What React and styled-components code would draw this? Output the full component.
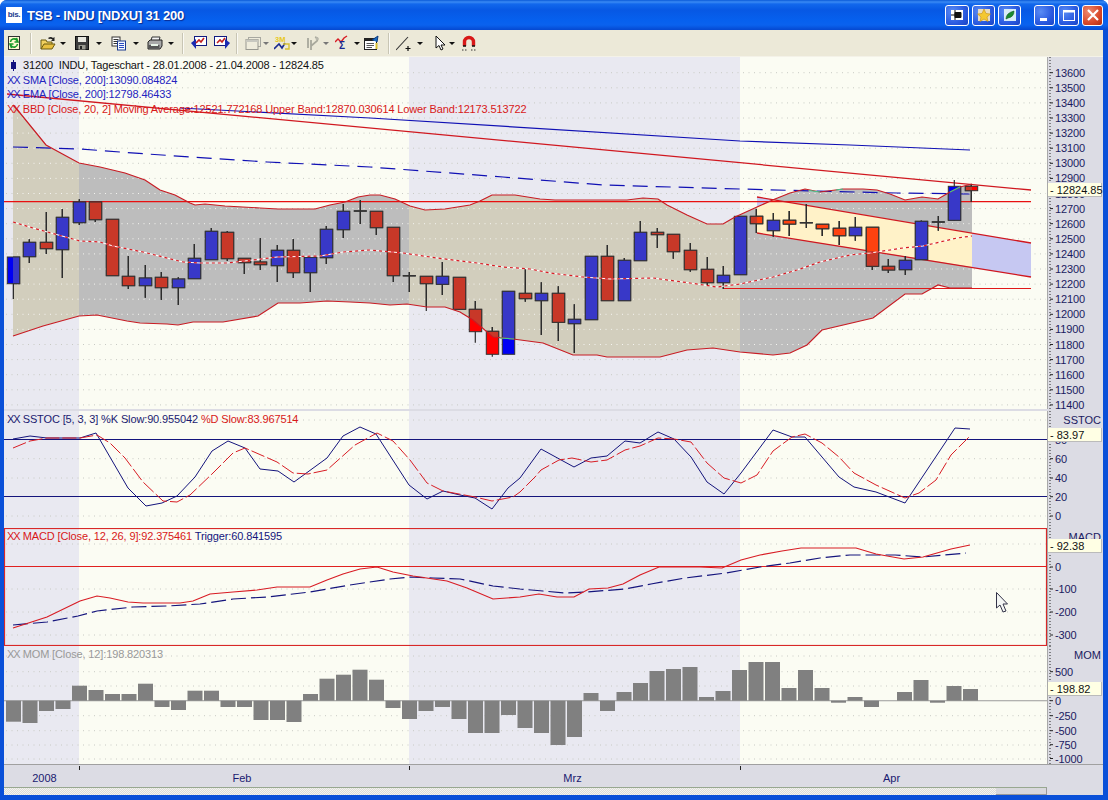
import React from 'react';
import styled, { createGlobalStyle } from 'styled-components';

const GlobalStyle = createGlobalStyle`
  html, body { margin: 0; padding: 0; background: #fff; }
  body { font-family: "Liberation Sans", Arial, sans-serif; }
`;

const Window = styled.div`
  width: 1108px;
  height: 800px;
  display: flex;
  flex-direction: column;
  overflow: hidden;
  background: #0a50d8;
  border-radius: 7px 7px 0 0;
`;

const TitleBar = styled.div`
  height: 30px;
  flex: none;
  display: flex;
  align-items: center;
  padding: 0 5px 0 6px;
  background: linear-gradient(180deg, #0a5ad8 0, #3a8af4 2px, #1268ec 4px, #0758e4 10px, #0660ee 20px, #0a62ee 25px, #0548d0 30px);
`;

const AppLogo = styled.div`
  width: 16px;
  height: 16px;
  background: #fff;
  color: #1a3a90;
  font-size: 8px;
  font-weight: bold;
  line-height: 16px;
  text-align: center;
  letter-spacing: -0.3px;
`;

const Title = styled.div`
  margin-left: 5px;
  flex: 1;
  color: #fff;
  font-size: 13px;
  font-weight: bold;
  letter-spacing: -0.2px;
  white-space: pre;
  text-shadow: 1px 1px 1px #0a2a90;
`;

const ButtonGroup = styled.div`
  display: flex;
  gap: ${p => p.$gap}px;
  margin-right: ${p => p.$after}px;
`;

const CaptionButton = styled.div`
  width: ${p => p.$w}px;
  height: 21px;
  box-sizing: border-box;
  border: 1px solid #fff;
  border-radius: 3px;
  display: flex;
  align-items: center;
  justify-content: center;
  background: ${p => p.$close
    ? 'radial-gradient(circle at 30% 30%, #ee8a70, #d8482a 60%, #b02c10)'
    : 'radial-gradient(circle at 30% 30%, #5a8cf4, #2a5ae0 60%, #1a44c4)'};
`;

const Body = styled.div`
  flex: 1;
  min-height: 0;
  margin: 0 5px 5px 4px;
  display: flex;
  flex-direction: column;
  background: #dcdce4;
`;

const Toolbar = styled.div`
  height: 27px;
  flex: none;
  box-sizing: border-box;
  display: flex;
  align-items: center;
  padding-left: 3px;
  background: #ece9d8;
  border-bottom: 1px solid #f4f2e8;
`;

const ToolGroup = styled.div`
  display: flex;
  align-items: center;
`;

const Tool = styled.div`
  width: ${p => p.$w}px;
  display: flex;
  align-items: center;
  gap: ${p => p.$gap || 0}px;
  flex: none;
`;

const Caret = styled.span`
  width: 0;
  height: 0;
  flex: none;
  border-left: 3px solid transparent;
  border-right: 3px solid transparent;
  border-top: 3px solid ${p => p.$off ? '#777' : '#111'};
`;

const ToolSep = styled.div`
  width: 1px;
  height: 21px;
  flex: none;
  margin: 0 ${p => p.$right}px 0 ${p => p.$left}px;
  background: #c8c5b4;
  box-shadow: 1px 0 0 #fbfaf4;
`;

const Icon = styled.svg`
  width: ${p => p.$w || 16}px;
  height: 16px;
  flex: none;
  display: block;
`;

const PaneRow = styled.div`
  height: ${p => p.$h}px;
  flex: none;
  display: grid;
  grid-template-columns: 1043px 56px;
  margin-bottom: ${p => p.$gap || 0}px;
`;

const ChartBox = styled.div`
  position: relative;
  overflow: hidden;
`;

const ChartSvg = styled.svg`
  display: block;
  width: 100%;
  height: 100%;
`;

const Legend = styled.div`
  position: absolute;
  left: 3px;
  top: 1px;
  font-size: 11px;
  letter-spacing: -0.13px;
  line-height: 14.5px;
  white-space: pre;
  color: ${p => p.$color || '#1a1a70'};
`;

const LegendLine = styled.div`
  color: ${p => p.$color || 'inherit'};
`;

const LegendPart = styled.span`
  color: ${p => p.$color};
`;

const Marks = styled.span`
  letter-spacing: -1px;
  margin-right: 3px;
`;

const Bullet = styled.span`
  position: relative;
  display: inline-block;
  width: 5px;
  height: 7px;
  margin: 0 7px 0 4px;
  background: #101080;
  &::before {
    content: '';
    position: absolute;
    left: 2px;
    top: -2px;
    width: 1px;
    height: 11px;
    background: #101080;
  }
`;

const AxisBox = styled.div`
  position: relative;
  overflow: hidden;
  background: #dcdce4;
  border-left: 1px solid #a8a8a8;
  box-sizing: border-box;
`;

const AxisName = styled.div`
  position: absolute;
  right: 2px;
  top: 3px;
  font-size: 11px;
  color: #1a1a60;
`;

const ValueTag = styled.div`
  position: absolute;
  left: 0;
  right: 1px;
  top: ${p => p.$top}px;
  height: 14px;
  box-sizing: border-box;
  padding-left: 2px;
  background: #ffffe4;
  border-right: 1px solid #bbb;
  border-bottom: 1px solid #bbb;
  color: #111;
  font-size: 11px;
  line-height: 14px;
  white-space: pre;
`;

const TimeRow = styled.div`
  height: 23px;
  flex: none;
  display: grid;
  grid-template-columns: 75px 330px 331px 307px 56px;
  border-top: 1px solid #a0a0a0;
  box-sizing: border-box;
  background: #dcdce4;
`;

const MonthCell = styled.div`
  position: relative;
  text-align: center;
  text-indent: ${p => p.$nudge || 0}px;
  font-size: 11px;
  line-height: 27px;
  color: #1a1a70;
  &::before {
    content: '';
    display: ${p => p.$tick ? 'block' : 'none'};
    position: absolute;
    left: 0;
    top: 1px;
    width: 1px;
    height: 4px;
    background: #222;
  }
`;

const ScrollRow = styled.div`
  flex: 1;
  display: grid;
  grid-template-columns: 1043px 56px;
`;

const ScrollTrack = styled.div`
  display: flex;
  justify-content: flex-end;
  border-top: 1px solid #98a890;
  background: repeating-conic-gradient(#dcdcd8 0 25%, #f4f4f0 0 50%) 0 0 / 2px 2px;
`;

const ScrollThumb = styled.div`
  width: 50px;
  background: #d8d8dc;
  border-right: 1px solid #999;
  border-bottom: 1px solid #999;
`;

const MONTHS = [
  { x: 4, w: 75, alt: true },
  { x: 79, w: 330, alt: false },
  { x: 409, w: 331, alt: true },
  { x: 740, w: 307, alt: false },
];

// x, wick top, body top, body bottom, wick bottom, colour
const CANDLES = [
  [13.3, 257, 257, 283.7, 299, 'b'], [29.3, 239.3, 242.3, 256.7, 263, 'b'], [46.3, 212, 242.3, 248.7, 254, 'r'],
  [62.3, 209, 217.3, 249.7, 278, 'b'], [79.3, 199.3, 202, 222.7, 225, 'b'], [95.3, 202, 202, 219.7, 222, 'r'],
  [112.3, 219.3, 219.3, 275.7, 275.7, 'r'], [128.3, 256, 276.3, 285.7, 289, 'r'], [145.3, 265, 278, 285.7, 297.7, 'b'],
  [161.3, 272, 277.3, 287.7, 300, 'r'], [178.3, 277.3, 279, 287.7, 305, 'b'], [194.3, 244, 258.3, 278.7, 279, 'b'],
  [211.3, 228, 231.3, 259.7, 260, 'b'], [227.3, 231, 232.3, 258.7, 261, 'r'], [244.3, 258, 258.3, 262.7, 274, 'r'],
  [260.3, 238, 262, 264.7, 270, 'r'], [277.3, 245, 250.3, 265.7, 282, 'b'], [293.3, 239, 250.3, 272.7, 278, 'r'],
  [310.3, 257, 257.3, 272.7, 292, 'b'], [326.3, 226, 229.3, 257.7, 264, 'b'], [343.3, 204, 211.3, 229.7, 238, 'b'],
  [360.3, 200, 211, 211, 224, 'd'], [376.3, 211, 211.3, 227.7, 235, 'r'], [393.3, 227, 227.3, 275.7, 282, 'r'],
  [409.3, 272, 275.7, 275.7, 292, 'd'], [426.3, 276, 276.3, 283.7, 311, 'r'], [442.3, 262, 276.3, 284.3, 295, 'b'],
  [459.3, 277, 277.3, 309.3, 310, 'r'], [475.3, 301, 309.3, 331.7, 342.7, 'r'], [492.3, 327, 331.3, 354.3, 356.7, 'r'],
  [508.3, 291, 291.3, 354.3, 354.3, 'b'], [525.3, 268.7, 293.3, 298.7, 301.7, 'r'], [541.3, 282.3, 293.3, 300.7, 335, 'b'],
  [558.3, 286.3, 293.3, 322.3, 341, 'r'], [574.3, 304.3, 319.3, 323.7, 353, 'b'], [591.3, 256, 256.3, 319.7, 319.7, 'b'],
  [607.3, 245, 256.3, 300.7, 301, 'r'], [624.3, 258, 260.3, 300.7, 301, 'b'], [640.3, 221, 232.3, 260.7, 261, 'b'],
  [657.3, 228, 232.3, 234.7, 248, 'r'], [673.3, 234, 234.3, 251.7, 258.7, 'r'], [690.3, 243, 250.3, 269.7, 271.7, 'r'],
  [707.3, 257, 269.3, 282.7, 285.7, 'r'], [723.3, 266, 275.3, 282.7, 289, 'b'], [740.3, 216, 216.3, 274.7, 274.7, 'b'],
  [756.3, 209, 216.3, 223.7, 233, 'r'], [773.3, 213, 220.3, 230.7, 236.7, 'b'], [789.3, 211, 220.3, 224, 236, 'r'],
  [806.3, 204, 222.7, 222.7, 228, 'd'], [822.3, 224, 224.3, 228.7, 236, 'r'], [839.3, 221, 228.3, 235.7, 245, 'r'],
  [855.3, 217, 227.3, 235.7, 240.7, 'b'], [872.3, 227, 227.3, 266.3, 270, 'r'], [888.3, 259, 266.3, 270, 273, 'r'],
  [905.3, 256, 260.3, 269.7, 275, 'b'], [921.3, 220.5, 221.3, 259.7, 260, 'b'], [938.3, 216, 222, 222, 230.7, 'd'],
  [954.3, 180, 186.3, 220.3, 221, 'b'], [971.3, 184, 186.3, 190.7, 201.7, 'r'],
];

const BAND_UP = [[13, 105], [20, 113], [46, 145], [79, 163], [100, 167], [125, 173], [145, 180], [160, 190], [175, 195], [190, 203], [195, 205], [205, 204], [225, 206], [260, 208], [278, 209], [315, 209], [330, 205], [345, 202], [358, 197], [370, 195], [380, 195], [395, 199], [410, 206], [425, 210], [445, 209], [470, 205], [480, 201], [492, 195], [515, 195], [540, 199], [555, 200], [600, 200], [627, 200], [643, 198], [658, 199], [667, 205], [687, 215], [707, 224], [723, 224], [735, 217], [757, 207], [775, 199], [790, 193], [805, 189], [820, 192], [843, 189], [863, 189], [877, 190], [890, 194], [905, 200], [922, 197], [938, 199], [950, 192], [960, 187], [972, 184]];
const BAND_LOW = [[13, 336], [43, 326], [79, 316], [97, 315], [127, 321], [140, 323], [167, 324], [178, 325], [193, 322], [223, 322], [258, 316], [278, 303], [300, 303], [327, 301], [350, 302], [370, 303], [390, 305], [407, 304], [427, 307], [445, 307], [460, 312], [473, 320], [493, 337], [513, 339], [543, 343], [573, 355], [597, 355], [607, 357], [633, 357], [660, 357], [687, 350], [713, 348], [740, 352], [773, 355], [790, 353], [807, 345], [822, 330], [873, 318], [905, 294], [922, 294], [938, 285], [950, 288], [972, 288]];
const BAND_MID = [[13, 222], [33, 228], [80, 241], [100, 242], [113, 246], [143, 252], [183, 262], [200, 263], [227, 263], [253, 260], [277, 257], [320, 256], [343, 252], [370, 250], [403, 253], [437, 258], [477, 263], [503, 267], [530, 269], [550, 273], [583, 277], [610, 279], [653, 278], [690, 283], [717, 287], [740, 284], [773, 277], [797, 270], [820, 262], [850, 255], [870, 253], [903, 248], [923, 246], [940, 242], [957, 238], [972, 236]];
const SMA = [[180, 108], [370, 118], [740, 141], [850, 145], [970, 150]];
const EMA = [[13, 147], [80, 149], [147, 154], [267, 162], [370, 167], [503, 177], [603, 185], [740, 189], [813, 191], [897, 193], [970, 194]];
const BAND_GLINTS = [[[809, 190.5], [820, 192]], [[836, 190], [843, 189]], [[950, 192], [960, 187]], [[500, 338], [514, 339]]];

const STOCH_K = [[13, 439], [30, 436], [47, 438], [80, 438], [96, 433], [128, 488], [146, 506], [162, 503], [177, 496], [195, 477], [212, 451], [228, 441], [245, 448], [260, 469], [278, 471], [294, 482], [327, 458], [343, 436], [360, 427], [376, 434], [409, 485], [427, 499], [443, 491], [460, 495], [475, 498], [492, 509], [508, 488], [520, 478], [541, 449], [574, 467], [591, 458], [607, 456], [625, 441], [640, 443], [658, 432], [674, 439], [691, 457], [707, 482], [724, 494], [741, 473], [773, 430], [792, 437], [805, 437], [839, 477], [854, 487], [876, 492], [905, 503], [955, 428], [970, 429]];
const STOCH_D = [[13, 448], [30, 441], [47, 438], [80, 438], [97, 435], [110, 443], [125, 458], [143, 482], [163, 501], [177, 502], [190, 495], [213, 473], [233, 453], [245, 448], [277, 462], [293, 473], [308, 474], [327, 470], [355, 445], [377, 433], [393, 441], [410, 460], [427, 483], [443, 491], [475, 497], [492, 501], [513, 497], [520, 492], [535, 477], [541, 470], [559, 460], [572, 458], [591, 462], [607, 460], [625, 450], [640, 446], [658, 438], [674, 439], [691, 442], [707, 463], [724, 478], [741, 483], [757, 475], [773, 451], [792, 437], [805, 434], [822, 443], [839, 457], [854, 473], [876, 485], [905, 498], [919, 493], [936, 480], [951, 455], [970, 436]];

const MACD = [[13, 628], [47, 617], [80, 601], [97, 596], [110, 598], [128, 602], [143, 603], [180, 603], [193, 601], [210, 594], [233, 592], [257, 590], [277, 587], [310, 587], [327, 580], [343, 574], [360, 569], [377, 567], [393, 572], [413, 576], [447, 581], [467, 588], [493, 599], [520, 597], [539, 594], [557, 597], [574, 597], [589, 589], [608, 588], [623, 584], [640, 575], [659, 567], [700, 567], [722, 568], [741, 560], [760, 555], [782, 551], [801, 548], [856, 548], [876, 554], [904, 559], [923, 557], [951, 549], [970, 545]];
const TRIGGER = [[13, 625], [47, 622], [78, 616], [97, 611], [133, 607], [167, 606], [200, 604], [233, 599], [267, 597], [310, 592], [350, 585], [390, 579], [410, 577], [433, 578], [460, 579], [493, 586], [520, 589], [543, 591], [565, 593], [587, 592], [625, 589], [651, 584], [685, 578], [726, 573], [760, 567], [790, 563], [820, 558], [850, 555], [895, 555], [923, 557], [966, 553]];

const MOM = [722.7, 724, 712, 710, 686.7, 691, 695, 695, 684.7, 708, 711, 691.7, 691.7, 708, 708, 721, 721, 723, 695, 679.7, 675.7, 670.7, 680.7, 709, 720, 712, 708, 720, 734, 734, 716, 729, 734, 746, 738, 694, 712, 693, 684, 672, 670, 668, 698, 692, 671, 663, 663, 689, 671, 689, 703.7, 698, 708, 701.7, 693, 681, 703.7, 687, 690];

const priceY = v => 118 + (13300 - v) / 100 * 15.1;
const PRICE_TICKS = [];
for (let v = 13600; v >= 11400; v -= 100) PRICE_TICKS.push({ label: String(v), y: priceY(v) });

const pts = list => list.map(p => p.join(',')).join(' ');

const Trace = ({ data, color, width = 1.2, dash }) => (
  <polyline points={pts(data)} fill="none" stroke={color} strokeWidth={width} strokeDasharray={dash} />
);

const Rule = ({ x1 = 4, x2 = 1047, y, y2, color, width = 1.1 }) => (
  <line x1={x1} x2={x2} y1={y} y2={y2 === undefined ? y : y2} stroke={color} strokeWidth={width} />
);

const Backdrop = ({ top, height, grid }) => (
  <g>
    {MONTHS.map(m => (
      <rect key={m.x} x={m.x} y={top} width={m.w} height={height} fill={m.alt ? '#e9e9f1' : '#fbfcf3'} />
    ))}
    <GridDots ys={grid} color="#c8cac4" />
  </g>
);

const GridDots = ({ ys, color }) => (
  <g>
    {ys.map(y => (
      <line key={y} x1="6" x2="1046" y1={y} y2={y} stroke={color} strokeWidth="1" strokeDasharray="1 4.5" />
    ))}
  </g>
);

const Candles = ({ up, down, only }) => (
  <g>
    {CANDLES.filter(c => !only || c[5] === only).map(([x, wt, bt, bb, wb, kind]) => (
      <g key={x}>
        <line x1={x} x2={x} y1={wt} y2={wb} stroke="#2c2c2c" strokeWidth="1.2" />
        {kind === 'd'
          ? <line x1={x - 6.5} x2={x + 6.5} y1={bt} y2={bt} stroke="#333" strokeWidth="1.4" />
          : <rect x={x - 6} y={bt} width="12.4" height={bb - bt} fill={kind === 'b' ? up : down} stroke="#333" strokeWidth="1" />}
      </g>
    ))}
  </g>
);

const Pane = ({ top, height, gap, grid, ticks, axisName, tagTop, tag, legend, children }) => (
  <PaneRow $h={height} $gap={gap}>
    <ChartBox>
      <ChartSvg viewBox={`4 ${top} 1043 ${height}`} preserveAspectRatio="none">
        <Backdrop top={top} height={height} grid={grid} />
        {children}
      </ChartSvg>
      {legend}
    </ChartBox>
    <AxisBox>
      <ChartSvg viewBox={`1048 ${top} 55 ${height}`} preserveAspectRatio="none">
        <line x1="1050" x2="1050" y1={top} y2={top + height} stroke="#222" strokeWidth="1" strokeDasharray="1 2" />
        {ticks.map(t => (
          <g key={t.label}>
            <line x1="1050" x2="1053" y1={t.y} y2={t.y} stroke="#222" strokeWidth="1" />
            <text x="1055" y={t.y + 4} fontSize="11" letterSpacing="-0.1" fill="#1a1a60">{t.label}</text>
          </g>
        ))}
      </ChartSvg>
      {axisName && <AxisName>{axisName}</AxisName>}
      {tag && <ValueTag $top={tagTop}>{tag}</ValueTag>}
    </AxisBox>
  </PaneRow>
);

const MainChart = () => {
  const bandPoly = pts(BAND_UP) + ' ' + pts([...BAND_LOW].reverse());
  const grid = PRICE_TICKS.map(t => t.y);
  return (
    <Pane
      top={57}
      height={352}
      gap={2}
      grid={grid}
      ticks={PRICE_TICKS}
      tagTop={126}
      tag="- 12824.85"
      legend={
        <Legend>
          <LegendLine $color="#111"><Bullet />{'31200  INDU, Tageschart - 28.01.2008 - 21.04.2008 - 12824.85'}</LegendLine>
          <LegendLine $color="#2424c0"><Marks>XX</Marks>SMA [Close, 200]:13090.084824</LegendLine>
          <LegendLine $color="#2424c0"><Marks>XX</Marks>EMA [Close, 200]:12798.46433</LegendLine>
          <LegendLine $color="#d81818"><Marks>XX</Marks>BBD [Close, 20, 2] Moving Average:12521.772168 Upper Band:12870.030614 Lower Band:12173.513722</LegendLine>
        </Legend>
      }
    >
      <defs>
        <clipPath id="band"><polygon points={bandPoly} /></clipPath>
        <clipPath id="channel"><polygon points="757,197 972,233 972,267 757,233" /></clipPath>
      </defs>
      <polygon points="757,197 1031,243 1031,277 757,233" fill="#c6c8f2" />
      <g clipPath="url(#band)">
        {MONTHS.map(m => (
          <rect key={m.x} x={m.x} y="57" width={m.w} height="352" fill={m.alt ? '#d2cebd' : '#bdbdbd'} />
        ))}
        <GridDots ys={grid} color="#f4f4f0" />
        <polygon points="757,197 972,233 972,267 757,233" fill="#fff2c8" />
      </g>
      <Rule x1={4} x2={1031} y={201.6} color="#e81010" width={1.4} />
      <Rule x1={723} x2={1031} y={288.5} color="#e01818" />
      <Rule x1={7} x2={1031} y={94} y2={190} color="#d01820" width={1.3} />
      <Rule x1={757} x2={1031} y={197} y2={243} color="#d01820" width={1.3} />
      <Rule x1={757} x2={1031} y={233} y2={277} color="#d01820" width={1.3} />
      <Trace data={SMA} color="#1010b4" width={1.2} />
      <Trace data={EMA} color="#1010b4" width={1.2} dash="15 8" />
      <Candles up="#0000f4" down="#ff0000" />
      <g clipPath="url(#band)">
        <Candles up="#3838c8" down="#c83828" />
        <g clipPath="url(#channel)">
          <Candles up="#3838c8" down="#ff4210" only="r" />
        </g>
      </g>
      <Trace data={BAND_UP} color="#c81c24" />
      <Trace data={BAND_LOW} color="#c81c24" />
      {BAND_GLINTS.map((g, i) => <Trace key={i} data={g} color="#40c890" />)}
      <Trace data={BAND_MID} color="#fff" />
      <Trace data={BAND_MID} color="#d81c24" dash="3 3" />
    </Pane>
  );
};

const StochChart = () => (
  <Pane
    top={411}
    height={117}
    grid={[420, 458.7, 478, 516]}
    ticks={[{ label: '80', y: 439.5 }, { label: '60', y: 458.7 }, { label: '40', y: 478 }, { label: '20', y: 496.7 }, { label: '0', y: 516 }]}
    axisName="SSTOC"
    tagTop={17}
    tag="- 83.97"
    legend={
      <Legend>
        <LegendLine><Marks>XX</Marks>SSTOC [5, 3, 3] %K Slow:90.955042 <LegendPart $color="#d81818">%D Slow:83.967514</LegendPart></LegendLine>
      </Legend>
    }
  >
    <Rule y={439.5} color="#14147c" />
    <Rule y={496.5} color="#14147c" />
    <Trace data={STOCH_K} color="#14147c" width={1} />
    <Trace data={STOCH_D} color="#d81c24" width={1} dash="14 3" />
  </Pane>
);

const MacdChart = () => (
  <Pane
    top={528}
    height={118}
    grid={[544, 589, 612, 635]}
    ticks={[{ label: '100', y: 544 }, { label: '0', y: 567 }, { label: '-100', y: 589 }, { label: '-200', y: 612 }, { label: '-300', y: 635 }]}
    axisName="MACD"
    tagTop={11}
    tag="- 92.38"
    legend={
      <Legend $color="#d81818">
        <LegendLine><Marks>XX</Marks>MACD [Close, 12, 26, 9]:92.375461 <LegendPart $color="#14147c">Trigger:60.841595</LegendPart></LegendLine>
      </Legend>
    }
  >
    <rect x="4.5" y="528.5" width="1042" height="117" fill="none" stroke="#d82828" strokeWidth="1.2" />
    <Rule y={566.5} color="#e02020" />
    <Trace data={TRIGGER} color="#14147c" dash="15 5" />
    <Trace data={MACD} color="#d81c24" />
    <path d="M996.5 592.5 L996.5 608 L1000 605 L1003 612 L1006 611 L1003 604 L1007.5 604 Z" fill="#f4f6f4" stroke="#333348" strokeWidth="1" />
  </Pane>
);

const MomChart = () => (
  <Pane
    top={647}
    height={118}
    grid={[657, 672.7, 687, 716.7, 731.7, 746, 760]}
    ticks={[{ label: '500', y: 672.7 }, { label: '0', y: 701.7 }, { label: '-250', y: 716.7 }, { label: '-500', y: 731.7 }, { label: '-750', y: 745.7 }, { label: '-1000', y: 759.5 }]}
    axisName="MOM"
    tagTop={36}
    tag="- 198.82"
    legend={
      <Legend $color="#999">
        <LegendLine><Marks>XX</Marks>MOM [Close, 12]:198.820313</LegendLine>
      </Legend>
    }
  >
    <Rule y={701.7} color="#9a9a9a" />
    {MOM.map((y, i) => (
      <rect
        key={i}
        x={6 + i * 16.5}
        y={Math.min(y, 701.7)}
        width="15"
        height={Math.abs(y - 701.7)}
        fill="#808080"
      />
    ))}
  </Pane>
);

const RefreshIcon = () => (
  <Icon $w={14} viewBox="0 0 14 16">
    <rect x="1.5" y="1.5" width="11" height="13" fill="#fffbd0" stroke="#333" />
    <path d="M3.5 7 A3.5 3.5 0 0 1 9.5 5 L9.5 3 L11 7 L7.5 7" fill="none" stroke="#1a9a2a" strokeWidth="1.6" />
    <path d="M10.5 9 A3.5 3.5 0 0 1 4.5 11 L4.5 13 L3 9 L6.5 9" fill="none" stroke="#1a9a2a" strokeWidth="1.6" />
  </Icon>
);

const FolderIcon = () => (
  <Icon viewBox="0 0 16 16">
    <path d="M1 14 L1 5 L6 5 L7 7 L12 7 L12 9" fill="#f0d060" stroke="#6a5a10" />
    <path d="M1 14 L4 9 L15 9 L12 14 Z" fill="#e8c040" stroke="#6a5a10" />
    <path d="M8 3 Q11 1 13 3 L14.5 2 L14.5 6 L11 6 L12.5 4.5 Q11 3.5 9 4" fill="#222" />
  </Icon>
);

const SaveIcon = () => (
  <Icon $w={14} viewBox="0 0 14 16">
    <rect x="0.5" y="1.5" width="13" height="13" fill="#3c3c3c" stroke="#111" />
    <rect x="3" y="2" width="8" height="5" fill="#e8e8e0" />
    <rect x="3.5" y="10" width="7" height="4.5" fill="#9a9a90" />
    <rect x="5" y="11" width="2" height="3" fill="#222" />
  </Icon>
);

const CopyIcon = () => (
  <Icon viewBox="0 0 16 16">
    <rect x="1" y="2" width="8" height="9" fill="#fff" stroke="#333" />
    <path d="M2.5 4.5 H7.5 M2.5 6.5 H7.5 M2.5 8.5 H7.5" stroke="#333" />
    <rect x="6.5" y="6" width="8" height="9" fill="#f4f8ff" stroke="#1a3a90" />
    <path d="M8 8.5 H13 M8 10.5 H13 M8 12.5 H13" stroke="#2a4ac0" />
  </Icon>
);

const PrintIcon = () => (
  <Icon viewBox="0 0 16 16">
    <path d="M4 6 L5 2 L13 2 L12 6 Z" fill="#f4f4f4" stroke="#333" />
    <path d="M1 7 L3 5 L15 5 L15 11 L13 14 L1 14 Z" fill="#a8a8a8" stroke="#222" />
    <rect x="1.5" y="10" width="11" height="3.5" fill="#555" />
    <rect x="4" y="9" width="7" height="2" fill="#e8f4e8" />
  </Icon>
);

const SlideIcon = ({ flip, line }) => (
  <Icon viewBox="0 0 16 16">
    <g transform={flip ? 'translate(16,0) scale(-1,1)' : undefined}>
      <rect x="3.5" y="1.5" width="12" height="9" fill="#fff" stroke="#101a80" />
      <path d="M0 8 L5 4 L5 14 Z" fill="#1a2ab0" />
    </g>
    <path d={flip ? 'M3 8 L6 5 L8 7 L11 3' : 'M5 8 L8 5 L10 7 L13 3'} fill="none" stroke={line} strokeWidth="1.6" />
  </Icon>
);

const PanelIcon = () => (
  <Icon viewBox="0 0 16 16">
    <rect x="3.5" y="2.5" width="12" height="9" fill="#efecdc" stroke="#a8a8a0" />
    <rect x="1" y="4.5" width="12" height="10" fill="#efecdc" stroke="#989890" />
    <rect x="1" y="4.5" width="12" height="2.5" fill="#c8c8c0" />
  </Icon>
);

const ThreeMIcon = () => (
  <Icon viewBox="0 0 16 16">
    <text x="1" y="6.5" fontSize="7.5" fontWeight="bold" fill="#e8c820">3M</text>
    <path d="M0 14 L5 9 L8 13 L11 8" fill="none" stroke="#1a2a90" strokeWidth="1.6" />
    <path d="M9 9 L15 9 L15 14 L11 14" fill="none" stroke="#d8c030" strokeWidth="1.4" />
  </Icon>
);

const IndicatorIcon = () => (
  <Icon viewBox="0 0 16 16">
    <path d="M3 3 V13 M6 5 V15 M10 2 Q14 3 12 6 L6 11" fill="none" stroke="#a8a89c" strokeWidth="1.8" />
    <circle cx="12" cy="3.5" r="1.5" fill="#b8b8ac" />
  </Icon>
);

const SigmaIcon = () => (
  <Icon viewBox="0 0 16 16">
    <path d="M0 7 L3 4 L6 7 L9 3 L12 1" fill="none" stroke="#d81c24" strokeWidth="1.4" />
    <text x="4" y="14" fontSize="10" fontWeight="bold" fill="#1a2a90">Σ</text>
  </Icon>
);

const PropsIcon = () => (
  <Icon $w={18} viewBox="0 0 18 16">
    <rect x="1.5" y="3.5" width="12" height="11" fill="#fff" stroke="#222" />
    <rect x="2" y="4" width="11" height="2" fill="#222" />
    <path d="M3.5 8.5 H11 M3.5 10.5 H11 M3.5 12.5 H9" stroke="#555" />
    <path d="M9 5 L15 1 L14 7" fill="#1a6ac0" stroke="#0a3a80" />
    <path d="M13.5 8 L13.5 14" stroke="#d8c030" strokeWidth="2" />
  </Icon>
);

const LineIcon = () => (
  <Icon viewBox="0 0 16 16">
    <path d="M0 15 L12 2" stroke="#333" strokeWidth="1.1" />
    <path d="M12 11 V16 M9.5 13.5 H14.5" stroke="#111" strokeWidth="1.2" />
  </Icon>
);

const PointerIcon = () => (
  <Icon $w={11} viewBox="0 0 11 16">
    <path d="M1 1 L1 13 L4 10.5 L6 15 L8 14 L6 10 L10 10 Z" fill="#fff" stroke="#111" />
  </Icon>
);

const MagnetIcon = () => (
  <Icon viewBox="0 0 16 16">
    <path d="M3.5 11 V7 A4.5 4.5 0 0 1 12.5 7 V11" fill="none" stroke="#d81818" strokeWidth="3.4" />
    <path d="M2 11 H5 M11 11 H14" stroke="#111" strokeWidth="1.4" />
    <path d="M1 15 H2.5 M4 15 H5.5 M10 15 H11.5 M13 15 H14.5" stroke="#333" />
  </Icon>
);

const CaptionGlyph = ({ kind }) => {
  if (kind === 'flag') {
    return (
      <Icon viewBox="0 0 16 16">
        <rect x="2" y="3" width="12" height="10" fill="#fff" />
        <path d="M2 8 H6 M6 5.5 H12 V10.5 H6 Z" fill="#111" stroke="#111" />
        <path d="M6 3 V13" stroke="#111" />
      </Icon>
    );
  }
  if (kind === 'star') {
    return (
      <Icon viewBox="0 0 16 16">
        <rect x="2" y="2" width="12" height="12" fill="#e8dcc0" />
        <path d="M8 2 L10 6.5 L14.5 7 L11 10 L12 14.5 L8 12 L4 14.5 L5 10 L1.5 7 L6 6.5 Z" fill="#f4c830" stroke="#c89010" strokeWidth="0.6" />
      </Icon>
    );
  }
  return (
    <Icon viewBox="0 0 16 16">
      <rect x="2" y="2" width="12" height="12" fill="#d8ecf8" />
      <path d="M4 12 Q4 6 12 4 Q12 10 6 11 Z" fill="#1a8a30" stroke="#0a5a18" strokeWidth="0.6" />
    </Icon>
  );
};

export default function App() {
  return (
    <Window>
      <GlobalStyle />
      <TitleBar>
        <AppLogo>bis.</AppLogo>
        <Title>{'TSB - INDU [NDXU] 31 200'}</Title>
        <ButtonGroup $gap={3} $after={13}>
          <CaptionButton $w={24}><CaptionGlyph kind="flag" /></CaptionButton>
          <CaptionButton $w={23}><CaptionGlyph kind="star" /></CaptionButton>
          <CaptionButton $w={23}><CaptionGlyph kind="leaf" /></CaptionButton>
        </ButtonGroup>
        <ButtonGroup $gap={3} $after={0}>
          <CaptionButton $w={21}>
            <Icon viewBox="0 0 16 16"><rect x="3" y="11" width="7" height="3" fill="#fff" /></Icon>
          </CaptionButton>
          <CaptionButton $w={21}>
            <Icon viewBox="0 0 16 16"><rect x="2.5" y="3.5" width="11" height="10" fill="none" stroke="#fff" /><rect x="2" y="3" width="12" height="2.5" fill="#fff" /></Icon>
          </CaptionButton>
          <CaptionButton $w={21} $close>
            <Icon viewBox="0 0 16 16"><path d="M3 3 L13 13 M13 3 L3 13" stroke="#fff" strokeWidth="2.2" /></Icon>
          </CaptionButton>
        </ButtonGroup>
      </TitleBar>
      <Body>
        <Toolbar>
          <ToolGroup><Tool $w={14}><RefreshIcon /></Tool></ToolGroup>
          <ToolSep $left={9} $right={9} />
          <ToolGroup>
            <Tool $w={35} $gap={4}><FolderIcon /><Caret /></Tool>
            <Tool $w={36} $gap={7}><SaveIcon /><Caret /></Tool>
            <Tool $w={36} $gap={6}><CopyIcon /><Caret /></Tool>
            <Tool $w={34} $gap={5}><PrintIcon /><Caret /></Tool>
          </ToolGroup>
          <ToolSep $left={1} $right={8} />
          <ToolGroup>
            <Tool $w={23}><SlideIcon line="#c02020" /></Tool>
            <Tool $w={16}><SlideIcon flip line="#c02020" /></Tool>
          </ToolGroup>
          <ToolSep $left={6} $right={8} />
          <ToolGroup>
            <Tool $w={29} $gap={2}><PanelIcon /><Caret $off /></Tool>
            <Tool $w={31} $gap={1}><ThreeMIcon /><Caret /></Tool>
            <Tool $w={30} $gap={2}><IndicatorIcon /><Caret $off /></Tool>
            <Tool $w={28} $gap={3}><SigmaIcon /><Caret /></Tool>
            <Tool $w={18}><PropsIcon /></Tool>
          </ToolGroup>
          <ToolSep $left={7} $right={7} />
          <ToolGroup>
            <Tool $w={39} $gap={5}><LineIcon /><Caret /></Tool>
            <Tool $w={26} $gap={3}><PointerIcon /><Caret /></Tool>
            <Tool $w={16}><MagnetIcon /></Tool>
          </ToolGroup>
        </Toolbar>
        <MainChart />
        <StochChart />
        <MacdChart />
        <MomChart />
        <TimeRow>
          <MonthCell $nudge={6}>2008</MonthCell>
          <MonthCell $tick $nudge={-4}>Feb</MonthCell>
          <MonthCell $tick $nudge={-4}>Mrz</MonthCell>
          <MonthCell $tick $nudge={-4}>Apr</MonthCell>
          <MonthCell />
        </TimeRow>
        <ScrollRow>
          <ScrollTrack><ScrollThumb /></ScrollTrack>
        </ScrollRow>
      </Body>
    </Window>
  );
}
